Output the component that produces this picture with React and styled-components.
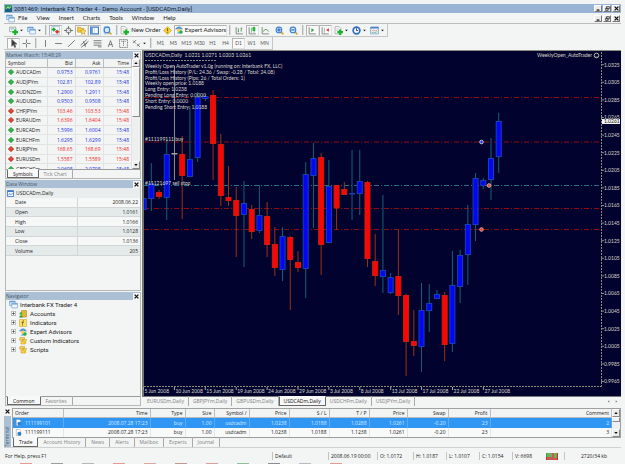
import styled, { createGlobalStyle, css } from "styled-components";

const GlobalStyle = createGlobalStyle`
  * {
    box-sizing: border-box;
  }

  body {
    margin: 0;
    background: #f3f4f4;
    color: #222;
    font-family: "Open Sans", "Liberation Sans", sans-serif;
    font-size: 5px;
    line-height: 8px;
  }

  button, input {
    font: inherit;
    color: inherit;
  }

  svg {
    display: block;
    flex: none;
  }
`;

const Page = styled.div`
  display: flex;
  flex-direction: column;
  min-height: 100vh;
  padding: 4px 4px 0 4px;
`;

const TitleBar = styled.header`
  display: flex;
  align-items: center;
  gap: 2px;
  height: 9px;
  padding: 0 1px;
  background: #99b4d4;
  color: #14202e;
  font-family: Roboto, sans-serif;
  font-size: 6px;
`;

const Title = styled.h1`
  flex: 1;
  margin: 0;
  font-size: inherit;
  font-weight: 400;
  white-space: nowrap;
`;

const WindowButtons = styled.div`
  display: flex;
  gap: 1px;
  margin-left: auto;
`;

const WindowButton = styled.button`
  display: flex;
  align-items: center;
  justify-content: center;
  width: 8px;
  height: 7px;
  padding: 0;
  border: 1px solid;
  border-color: #fff #777 #777 #fff;
  background: #ececec;
`;

const MenuBar = styled.nav`
  display: flex;
  align-items: center;
  height: 11px;
  padding: 0 1px 0 2px;
  border-bottom: 1px solid #bcbcbc;
  font-family: Lato, sans-serif;
  font-size: 6px;
`;

const MenuItem = styled.button`
  padding: 0;
  border: 0;
  margin-left: ${({ $gap }) => $gap || 9}px;
  background: none;
`;

const Toolbars = styled.div`
  display: flex;
  flex-direction: column;
  align-items: flex-start;
`;

const Toolbar = styled.div`
  display: flex;
  align-items: center;
  height: 13px;
  padding: 0 1px 0 3px;
  border: solid #c4c6c6;
  border-width: 0 1px 1px 0;
`;

const Grip = styled.span`
  width: 2px;
  height: 10px;
  margin: 0 2px;
  border-left: 1px solid #b4b6b6;
  border-right: 1px solid #dcdede;
`;

const Tool = styled.button`
  display: flex;
  align-items: center;
  justify-content: center;
  gap: 2px;
  width: ${({ $width }) => $width || 13}px;
  height: 11px;
  padding: 0;
  border: 1px solid transparent;
  background: none;
  color: ${({ $muted }) => ($muted ? "#555" : "#222")};
  font-family: Lato, sans-serif;
  font-size: ${({ $muted }) => ($muted ? 5 : 6)}px;
  white-space: nowrap;

  ${({ $pressed }) =>
    $pressed &&
    css`
      border-color: #b2b4b4 #e0e0e0 #e0e0e0 #b2b4b4;
      background: #fafafa;
    `}
`;

const Workspace = styled.main`
  display: grid;
  grid-template-columns: 136px minmax(0, 1fr);
  gap: 1px;
  padding-left: 1px;
`;

const Sidebar = styled.aside`
  display: grid;
  grid-template-rows: 128px 111px 114px;
  gap: 1px;
  padding-top: 1px;
`;

const Panel = styled.section`
  display: flex;
  flex-direction: column;
  min-height: 0;
  border: 1px solid #b6b8b8;
  border-top: 0;
  overflow: hidden;
`;

const PanelTitle = styled.h2`
  display: flex;
  align-items: center;
  justify-content: space-between;
  flex: none;
  height: 8px;
  margin: 0;
  background: #abc0d4;
  color: #46586b;
  font-size: 5px;
  font-weight: 400;
`;

const CloseButton = styled.button`
  display: flex;
  align-items: center;
  justify-content: center;
  width: 7px;
  height: 7px;
  padding: 0;
  border: 0;
  background: #f4f4f4;
`;

const Quotes = styled.div`
  display: flex;
  flex: 1;
  min-height: 0;
  overflow: hidden;
`;

const Table = styled.table`
  flex: 0 1 auto;
  align-self: flex-start;
  width: 100%;
  height: ${({ $height }) => $height}px;
  border-collapse: collapse;
  table-layout: fixed;

  th, td {
    padding: 0 2px;
    overflow: hidden;
    font-weight: 400;
    text-align: right;
    white-space: nowrap;
    line-height: 8px;
  }

  th:first-child, td:first-child {
    text-align: left;
  }
`;

const QuoteRow = styled.tr`
  color: ${({ $down }) => ($down ? "#f0281e" : "#2230e6")};
  border-bottom: 1px solid #e2e4e4;

  td {
    border-right: 1px solid #e2e4e4;
  }

  td:first-child {
    color: #222;
  }
`;

const HeadRow = styled.tr`
  border-bottom: 1px solid #b8baba;
  background: #f2f3f3;

  th {
    border-right: 1px solid #bcbebe;
  }
`;

const Inline = styled.span`
  display: flex;
  align-items: center;
  gap: ${({ $gap }) => $gap || 2}px;
`;

const DataRow = styled.tr`
  border-bottom: 1px solid #d2d6d6;
  background: ${({ $shaded }) => ($shaded ? "#e4e9e9" : "#f6f7f7")};

  td {
    border-left: 1px solid #d2d6d6;
  }

  th:first-child {
    padding-left: 9px;
  }
`;

const DataHeading = styled(Inline)`
  height: 10px;
  padding-left: 1px;
  flex: none;
  background: #e9eded;
`;

const Scrollbar = styled.div`
  display: flex;
  flex-direction: column;
  justify-content: space-between;
  flex: none;
  width: 8px;
  background: #eef0f0;
`;

const ScrollButton = styled.button`
  display: flex;
  align-items: center;
  justify-content: center;
  height: 8px;
  padding: 0;
  border: 1px solid;
  border-color: #fff #888 #888 #fff;
  background: #ececec;
`;

const ScrollThumb = styled.span`
  flex: 0 0 ${({ $size }) => $size}px;
  margin-bottom: auto;
  border: 1px solid;
  border-color: #fff #888 #888 #fff;
  background: #f2f3f3;
`;

const Tabs = styled.div`
  display: flex;
  flex: none;
  height: ${({ $height }) => $height || 9}px;
  padding-left: 1px;
  border-top: 1px solid #9a9c9c;
`;

const Tab = styled.button`
  padding: 0 5px;
  margin-top: -1px;
  border: 0;
  border-right: 1px solid #aaa;
  background: none;
  color: #808282;
  line-height: 8px;
  white-space: nowrap;

  ${({ $active }) =>
    $active &&
    css`
      border: 1px solid #666;
      border-top-color: #f8f8f8;
      background: #f8f8f8;
      color: #111;
    `}
`;

const Tree = styled.ul`
  flex: 1;
  margin: 0;
  padding: 0 0 0 3px;
  list-style: none;
`;

const TreeItem = styled.li`
  display: flex;
  align-items: center;
  gap: ${({ $root }) => ($root ? 2 : 3)}px;
  height: 9px;
  padding-left: ${({ $root }) => ($root ? 0 : 2)}px;
  font-family: Roboto, sans-serif;
  font-size: 6px;
`;

const ChartPane = styled.section`
  display: flex;
  flex-direction: column;
  min-width: 0;
`;

const ChartTabs = styled(Tabs)`
  height: 11px;
  border-top: 1px solid #777;
  align-items: flex-start;

  ${Tab} {
    height: 10px;
    padding: 0 4px;
    line-height: 9px;
  }
`;

const TabArrows = styled.span`
  display: flex;
  gap: 5px;
  margin: 3px 3px 0 auto;
`;

const Terminal = styled.section`
  display: grid;
  grid-template-columns: 8px minmax(0, 1fr);
  margin-top: 1px;
  border-bottom: 1px solid #d0d2d2;
`;

const TerminalSide = styled.div`
  display: flex;
  flex-direction: column;
  gap: 1px;
`;

const TerminalTitle = styled.h2`
  flex: 1;
  width: 7px;
  margin: 0;
  background: #abc0d4;
  color: #46586b;
  font-size: 5px;
  font-weight: 400;
  line-height: 7px;
  writing-mode: vertical-rl;
  transform: rotate(180deg);
`;

const TerminalBody = styled.div`
  display: flex;
  border: 1px solid #a0a2a2;
  border-bottom: 0;
`;

const OrderRow = styled.tr`
  background: ${({ $selected }) => ($selected ? "#3096f4" : "#f8f9f9")};
  color: ${({ $selected }) => ($selected ? "#d6eaff" : "#222")};

  td {
    border-right: 1px solid ${({ $selected }) => ($selected ? "#58aaf6" : "#e4e6e6")};
  }
`;

const StatusBar = styled.footer`
  display: grid;
  grid-template-columns: minmax(0, 1fr) 56px 49px 36px 33px 33px 33px 34px 18px 57px;
  align-items: center;
  height: 10px;
  margin-top: 3px;
  white-space: nowrap;
`;

const StatusCell = styled.span`
  height: 8px;
  padding-left: ${({ $plain }) => ($plain ? 1 : 2)}px;
  border-left: ${({ $plain }) => ($plain ? 0 : 1)}px solid #c2c4c4;
  text-align: ${({ $center }) => ($center ? "center" : "left")};
`;

const Taskbar = styled.div`
  display: flex;
  gap: 19px;
  height: 2px;
  padding: 0 16px;
  margin-top: auto;
  overflow: hidden;
`;

const TaskMark = styled.span`
  flex: none;
  width: 12px;
  height: 1px;
  margin-top: 1px;
  background: ${({ $color }) => $color};
`;

const Icon = ({ size = 9, children }) => (
  <svg width={size} height={size} viewBox="0 0 16 16" fill="none" aria-hidden="true">
    {children}
  </svg>
);

const Cross = () => (
  <Icon size={5}>
    <path d="M2 2l12 12M14 2L2 14" stroke="#111" strokeWidth="4" />
  </Icon>
);

const Triangle = ({ up, size = 4 }) => (
  <Icon size={size}>
    <path d={up ? "M1 12h14L8 4z" : "M1 4h14L8 12z"} fill="#111" />
  </Icon>
);

const PlusMark = () => <path d="M11 6v10M6 11h10" stroke="#17b52b" strokeWidth="4" />;

const NewChartIcon = () => (
  <Icon>
    <path d="M1 2h11v8H1z" fill="#e9f4ea" stroke="#66906c" />
    <path d="M3 5h6" stroke="#4b85c8" />
    <PlusMark />
  </Icon>
);

const ProfilesIcon = () => (
  <Icon>
    <path d="M1 2h10v8H1z" fill="#cfe4fa" stroke="#5c93cf" />
    <path d="M5 6h10v8H5z" fill="#f2f8ff" stroke="#5c93cf" />
    <path d="M1 3h10M5 7h10" stroke="#5c93cf" strokeWidth="2" />
  </Icon>
);

const WatchIcon = () => (
  <Icon>
    <path d="M1 1h14v14H1z" fill="#f6fbff" stroke="#80a9d4" />
    <path d="M5 2l4 4-4 4-4-4z" fill="#20ad35" />
    <path d="M11 6l4 4-4 4-4-4z" fill="#e2382b" />
  </Icon>
);

const TargetIcon = () => (
  <Icon>
    <circle cx="8" cy="8" r="4.500" stroke="#666" strokeWidth="1.500" />
    <path d="M8 0v6M8 10v6M0 8h6M10 8h6" stroke="#666" strokeWidth="1.500" />
  </Icon>
);

const FolderStarIcon = () => (
  <Icon>
    <path d="M1 2h5l1 2h5v7H1z" fill="#f5c93c" stroke="#b98c1a" />
    <path d="M11 5l1.500 3 3.500.500-2.500 2.500.500 4-3-2-3 2 .500-4L6 8.500 9.500 8z" fill="#ffe06b" stroke="#bb8d16" />
  </Icon>
);

const WindowIcon = () => (
  <Icon>
    <path d="M1 2h14v12H1z" fill="#fff" stroke="#3d7cc2" strokeWidth="2" />
    <path d="M1 2h4v12H1z" fill="#5b9ade" />
    <path d="M7 5h2M7 8h2M7 11h2" stroke="#999" />
  </Icon>
);

const MagnifierIcon = ({ mark }) => (
  <Icon>
    {mark === "page" && <path d="M2 1h9v13H2z" fill="#eef5fc" stroke="#8ba9c6" />}
    <path d="M10 10l5 5" stroke="#d8a92d" strokeWidth="3" />
    <circle cx="7" cy="7" r="5" fill="#d5e9fd" stroke="#3f82cc" strokeWidth="2" />
    {mark !== "page" && <path d="M4 7h6" stroke="#2465b4" strokeWidth="2" />}
    {mark === "plus" && <path d="M7 4v6" stroke="#2465b4" strokeWidth="2" />}
  </Icon>
);

const OrderIcon = () => (
  <Icon>
    <path d="M2 1h7l3 3v10H2z" fill="#fdfdfd" stroke="#888" />
    <path d="M4 5h5M4 8h4" stroke="#aaa" />
    <PlusMark />
  </Icon>
);

const WarningIcon = () => (
  <Icon>
    <path d="M8 1l7 7-7 7-7-7z" fill="#f8cf36" stroke="#c8981a" />
    <path d="M8 4v5M8 10v2" stroke="#8a6508" strokeWidth="2" />
  </Icon>
);

const AdvisorIcon = () => (
  <Icon size={8}>
    <path d="M1 6q7-9 14 0z" fill="#4ea1dc" stroke="#2c78b4" />
    <circle cx="8" cy="9" r="4" fill="#f3cf6a" />
    <path d="M3 15q5-6 10 0z" fill="#47a8e0" />
    <circle cx="12" cy="12" r="3.500" fill="#25b143" />
  </Icon>
);

const BarsIcon = ({ kind }) => (
  <Icon>
    <path d="M2 2v12h12" stroke="#777" strokeWidth="1.500" />
    {kind === "bars" && <path d="M6 4v7M5 10h2M11 3v7M11 4h2" stroke="#4d8c55" strokeWidth="1.500" />}
    {kind === "candles" && (
      <>
        <path d="M6 3v9M11 1v11" stroke="#168a2a" />
        <path d="M8 2h5v7H8z" fill="#22b53a" />
      </>
    )}
    {kind === "line" && <path d="M4 10q4-8 10 0" stroke="#3c9a4a" strokeWidth="1.500" />}
    {kind === "scroll" && <path d="M6 4v7l5-4z" fill="#22a53a" />}
    {kind === "shift" && (
      <>
        <path d="M6 3v9" stroke="#777" />
        <path d="M14 4v6L9 7z" fill="#d73a2c" />
      </>
    )}
  </Icon>
);

const ClockIcon = () => (
  <Icon>
    <circle cx="8" cy="8" r="6" fill="#f2f8ff" stroke="#2f6fc4" strokeWidth="3" />
    <path d="M8 4v4h3" stroke="#333" strokeWidth="1.500" />
  </Icon>
);

const TemplateIcon = () => (
  <Icon>
    <path d="M1 2h14v12H1z" fill="#eff6ff" stroke="#4c83be" />
    <path d="M1 3h14" stroke="#4c83be" strokeWidth="3" />
    <path d="M3 9l3-2 3 2 4-2" stroke="#d05a40" />
    <path d="M3 12l3-1 3 1 4-2" stroke="#38a046" />
  </Icon>
);

const linePaths = {
  cursor: "M5 1v12l3-3 2 5 2-1-2-5h4z",
  crosshair: "M8 1v6M8 9v6M1 8h6M9 8h6",
  vertical: "M8 2v12",
  horizontal: "M2 8h12",
  trend: "M2 14L14 2",
  channel: "M1 11L12 1M2 15L15 4M7 12l6-5M6 4l4 10",
  fibonacci: "M1 3h14M1 7h14M1 11h14M9 14h6",
  text: "M4 14L8 3l4 11M5 10h6",
  label: "M1 1h14v14H1zM4 4h8M8 4v8",
  arrows: "M2 3l5 5M2 7l5-5M9 9l5 5M9 13l5-5",
};

const LineIcon = ({ name }) => (
  <Icon>
    <path
      d={linePaths[name]}
      stroke="#666"
      strokeWidth="1.500"
      fill={name === "cursor" ? "#333" : "none"}
      strokeDasharray={name === "label" ? "2 1" : undefined}
    />
  </Icon>
);

const ChartGlyph = ({ size = 7 }) => (
  <Icon size={size}>
    <path d="M1 1h14v14H1z" fill="#eaf3ff" stroke="#3c78c8" strokeWidth="2" />
    <path d="M1 3h14" stroke="#3c78c8" strokeWidth="3" />
    <path d="M3 12l3-4 3 3 4-4" stroke="#3c78c8" strokeWidth="1.500" />
  </Icon>
);

const AppLogo = () => (
  <Icon size={7}>
    <path d="M0 0h16v16H0z" fill="#2e9a52" />
    <path d="M0 11l5-5 4 4 7-8v14H0z" fill="#1b5f84" />
    <path d="M3 9l4-5 3 4 4-5" stroke="#c8f1a0" strokeWidth="2" />
  </Icon>
);

const Direction = ({ down }) => (
  <Icon size={6}>
    <path d="M8 1l7 7-7 7-7-7z" fill={down ? "#e5432f" : "#2cb548"} stroke={down ? "#a82a18" : "#178a30"} strokeWidth="2" />
  </Icon>
);

const DocIcon = () => (
  <Icon size={7}>
    <path d="M3 1h7l3 3v11H3z" fill="#fff" stroke="#888" />
    <circle cx="10" cy="11" r="4.500" fill="#2f7fd0" />
  </Icon>
);

const Expander = () => (
  <Icon size={5}>
    <path d="M1 1h14v14H1z" fill="#fff" stroke="#888" strokeWidth="2" />
    <path d="M4 8h8M8 4v8" stroke="#222" strokeWidth="2" />
  </Icon>
);

const NavIcon = ({ name }) => {
  if (name === "Accounts") {
    return (
      <Icon size={8}>
        <path d="M5 1h10v13H5z" fill="#e6b62e" stroke="#a27a14" />
        <circle cx="4" cy="7" r="3" fill="#4fb84c" />
        <path d="M0 15q4-9 8 0z" fill="#289a3a" />
      </Icon>
    );
  }
  if (name === "Expert Advisors") return <AdvisorIcon />;
  if (name === "Indicators") {
    return (
      <Icon size={8}>
        <path d="M1 1h14v14H1z" fill="#fbdf68" stroke="#c79d22" />
        <path d="M10 3q-3 0-3 4v6M5 7h5" stroke="#7c5c0b" strokeWidth="1.500" />
      </Icon>
    );
  }
  return (
    <Icon size={8}>
      <path d="M2 1h9v4h4l-3 9H4V6H1z" fill="#f7d552" stroke="#b88d1c" />
      <path d="M6 5h4M6 8h5" stroke="#94721a" />
      <path d="M12 9l3 3-3 3-3-3z" fill="#f0bd2c" />
    </Icon>
  );
};

const quotes = [
  ["AUDCADm", "0.9753", "0.9761"],
  ["AUDJPYm", "102.81", "102.89"],
  ["AUDNZDm", "1.2900", "1.2911"],
  ["AUDUSDm", "0.9503", "0.9508"],
  ["CHFJPYm", "103.46", "103.53", true],
  ["EURAUDm", "1.6396", "1.6404", true],
  ["EURCADm", "1.5996", "1.6004"],
  ["EURCHFm", "1.6295", "1.6299"],
  ["EURJPYm", "168.65", "168.69", true],
  ["EURUSDm", "1.5587", "1.5589", true],
  ["GBPCHFm", "2.0698", "2.0708"],
];

const dataRows = [
  ["Date", "2008.06.22"],
  ["Open", "1.0161"],
  ["High", "1.0166"],
  ["Low", "1.0128"],
  ["Close", "1.0136"],
  ["Volume", "205"],
];

const orderColumns = [
  ["Order", 50],
  ["Time", 87],
  ["Type", 35],
  ["Size", 29],
  ["Symbol  /", 35],
  ["Price", 40],
  ["S / L", 40],
  ["T / P", 40],
  ["Price", 38],
  ["Swap", 41],
  ["Profit", 42],
  ["Comment"],
];

const orders = [
  ["111199101", "2008.07.28 17:23", "buy", "1.00", "usdcadm", "1.0238", "1.0188", "1.0288", "1.0261", "-0.20", "23", "2"],
  ["111199111", "2008.07.28 17:23", "buy", "1.00", "usdcadm", "1.0238", "1.0188", "1.1238", "1.0261", "-0.20", "23", "3"],
];

// [kind, high, body top, body bottom, low]
const candles = [
  ["b", 160, 198, 210, 210], ["b", 163, 183, 199, 211], ["r", 190, 192, 197, 199],
  ["b", 139, 154, 198, 220], ["w", 66, 153, 154, 180], ["r", 136, 154, 176, 219],
  ["b", 107, 159, 177, 177], ["b", 92, 97, 158, 162], ["b", 94, 96, 99, 101],
  ["r", 90, 95, 144, 180], ["r", 134, 144, 196, 206], ["r", 166, 197, 201, 206],
  ["r", 187, 200, 216, 257], ["b", 181, 203, 215, 267], ["r", 205, 209, 232, 239],
  ["b", 185, 215, 231, 233], ["r", 202, 216, 245, 257], ["r", 227, 244, 268, 276],
  ["b", 227, 236, 270, 281], ["r", 236, 237, 260, 310], ["r", 251, 262, 268, 272],
  ["b", 162, 174, 269, 298], ["b", 143, 158, 176, 228], ["r", 153, 157, 245, 275],
  ["b", 160, 186, 243, 243], ["r", 185, 185, 208, 230], ["r", 182, 189, 195, 195],
  ["b", 150, 193, 194, 220], ["b", 150, 181, 194, 215], ["r", 181, 182, 259, 267],
  ["r", 234, 261, 276, 286], ["b", 195, 270, 277, 293], ["b", 273, 277, 293, 294],
  ["r", 230, 276, 296, 315], ["r", 294, 295, 342, 376], ["r", 310, 341, 346, 356],
  ["b", 283, 310, 347, 372], ["b", 284, 303, 311, 332], ["b", 290, 294, 299, 299],
  ["r", 292, 295, 345, 361], ["b", 251, 285, 344, 352], ["b", 250, 255, 287, 303],
  ["b", 205, 224, 255, 285], ["b", 173, 178, 225, 241], ["b", 178, 180, 186, 189],
  ["b", 138, 158, 180, 200], ["b", 113, 121, 157, 173],
];

const candleFill = { b: "#0505f5", r: "#fb0505", w: "#a5a5a5" };
const candleLine = { b: "#17607a", r: "#9a3214", w: "#8d8d90" };
const bodyLine = { b: "#1640b8", r: "#c8200c", w: "#a5a5a5" };

const levels = [[97.5, "#8f0c10"], [142, "#8f0c10"], [185.5, "#2a7086"], [208.5, "#8f0c10"], [229.5, "#8f0c10"]];

const dates = [
  "5 Jun 2008", "10 Jun 2008", "15 Jun 2008", "19 Jun 2008", "24 Jun 2008", "29 Jun 2008",
  "3 Jul 2008", "8 Jul 2008", "13 Jul 2008", "17 Jul 2008", "22 Jul 2008", "27 Jul 2008",
];

const notes = [
  "Weekly Open AutoTrader v1.0g (running on: Interbank FX, LLC)",
  "Profit/Loss History (P/L: 24.36 / Swap: -0.28 / Total: 24.08)",
  "Profit/Loss History (Pips: 26 / Total Orders: 1)",
  "Weekly open price: 1.0188",
  "Long Entry: 1.0238",
  "Pending Long Entry: 0.0000",
  "Short Entry: 0.0000",
  "Pending Short Entry: 1.0188",
];

const ChartDrawing = styled.svg`
  width: 100%;
  height: auto;
  background: #02022e;
  font-family: Lato, sans-serif;
  font-size: 5px;

  text {
    fill: #d8d8cc;
  }
`;

function Chart() {
  return (
    <ChartDrawing viewBox="142 50 479 346" role="img" aria-label="USDCADm daily candlestick chart">
      <path d="M142 50.500H621" stroke="#8a8c84" fill="none" />
      {levels.map(([y, color]) => (
        <path key={y} d={`M144 ${y}H601`} stroke={color} strokeDasharray="5 2 1 2" fill="none" />
      ))}
      {candles.map(([kind, high, top, bottom, low], i) => {
        const x = 143.6 + i * 7.72;
        return (
          <g key={i}>
            <path d={`M${x} ${high}V${low}`} stroke={candleLine[kind]} />
            <rect
              x={x - 2.5}
              y={top + 0.5}
              width="5"
              height={Math.max(bottom - top - 1, 0.5)}
              fill={candleFill[kind]}
              stroke={bodyLine[kind]}
            />
          </g>
        );
      })}
      <rect x="142" y="51" width="2" height="345" fill="#74776f" />
      <circle cx="481.500" cy="142" r="1.800" fill="#2438d8" stroke="#b9c4dc" />
      <circle cx="489" cy="185.500" r="1.800" fill="#f04030" stroke="#d0a890" />
      <circle cx="481.500" cy="229.500" r="1.800" fill="#f04030" stroke="#d0a890" />
      <path d="M601.500 52V386.500M144 386.500H601.500" stroke="#8c8c78" strokeDasharray="2 1" fill="none" />
      <text x="145" y="57">USDCADm,Daily&#160; 1.0221 1.0271 1.0203 1.0261</text>
      <path d="M145 60.500h71" stroke="#8c8c84" strokeDasharray="2 1" />
      {notes.map((note, i) => (
        <text key={note} x="145" y={68 + i * 5.8}>{note}</text>
      ))}
      <text x="145" y="141">#111199111 buy</text>
      <text x="145" y="185">#11121697 sell stop</text>
      <text x="592" y="57" textAnchor="end">WeeklyOpen_AutoTrader</text>
      <circle cx="596.500" cy="55.500" r="2.300" fill="none" stroke="#b8b8ac" />
      <path d="M595.500 56.500q1 1 2 0" stroke="#b8b8ac" strokeWidth="0.600" fill="none" />
      {Array.from({ length: 19 }, (_, i) => (
        <g key={i}>
          <path d={`M601 ${64.7 + i * 17.6}h3`} stroke="#8c8c78" />
          <text x="604" y={66.5 + i * 17.6}>{(1.0325 - i * 0.002).toFixed(4)}</text>
        </g>
      ))}
      <rect x="602" y="119" width="18" height="5" fill="#f4f4f4" />
      <text x="604" y="123" style={{ fill: "#111" }}>1.0261</text>
      {dates.map((date, i) => (
        <g key={date}>
          <path d={`M${143.5 + i * 30.9} 387v3`} stroke="#a8a898" />
          <text x={144.5 + i * 30.9} y="393">{date}</text>
        </g>
      ))}
    </ChartDrawing>
  );
}

function WindowControls() {
  return (
    <WindowButtons>
      <WindowButton aria-label="Minimize">
        <Icon size={5}><path d="M2 13h9" stroke="#111" strokeWidth="4" /></Icon>
      </WindowButton>
      <WindowButton aria-label="Restore">
        <Icon size={5}><path d="M5 2h9v7H5zM2 7h8v7H2z" stroke="#111" strokeWidth="2" /></Icon>
      </WindowButton>
      <WindowButton aria-label="Close"><Cross /></WindowButton>
    </WindowButtons>
  );
}

function PanelHeader({ children }) {
  return (
    <PanelTitle>
      {children}
      <CloseButton aria-label={`Close ${children}`}><Cross /></CloseButton>
    </PanelTitle>
  );
}

function Scroll({ thumb }) {
  return (
    <Scrollbar>
      <ScrollButton aria-label="Scroll up"><Triangle up /></ScrollButton>
      <ScrollThumb $size={thumb} />
      <ScrollButton aria-label="Scroll down"><Triangle /></ScrollButton>
    </Scrollbar>
  );
}

function MarketWatch() {
  return (
    <Panel>
      <PanelHeader>Market Watch: 15:48:29</PanelHeader>
      <Quotes>
        <Table $height={115}>
          <colgroup>
            <col width="41" />
            <col width="28" />
            <col width="28" />
            <col />
          </colgroup>
          <thead>
            <HeadRow>
              <th>Symbol</th>
              <th>Bid</th>
              <th>Ask</th>
              <th>Time</th>
            </HeadRow>
          </thead>
          <tbody>
            {quotes.map(([symbol, bid, ask, down]) => (
              <QuoteRow key={symbol} $down={down}>
                <td><Inline><Direction down={down} />{symbol}</Inline></td>
                <td>{bid}</td>
                <td>{ask}</td>
                <td>15:48</td>
              </QuoteRow>
            ))}
          </tbody>
        </Table>
        <Scroll thumb={50} />
      </Quotes>
      <Tabs>
        <Tab $active>Symbols</Tab>
        <Tab>Tick Chart</Tab>
      </Tabs>
    </Panel>
  );
}

function DataWindow() {
  return (
    <Panel>
      <PanelHeader>Data Window</PanelHeader>
      <DataHeading><ChartGlyph />USDCADm,Daily</DataHeading>
      <Table $height={58}>
        <colgroup>
          <col width="71" />
          <col />
        </colgroup>
        <tbody>
          {dataRows.map(([name, value], i) => (
            <DataRow key={name} $shaded={i % 2 === 1}>
              <th scope="row">{name}</th>
              <td>{value}</td>
            </DataRow>
          ))}
        </tbody>
      </Table>
    </Panel>
  );
}

function Navigator() {
  return (
    <Panel>
      <PanelHeader>Navigator</PanelHeader>
      <Tree>
        <TreeItem $root><ProfilesIcon />Interbank FX Trader 4</TreeItem>
        {["Accounts", "Indicators", "Expert Advisors", "Custom Indicators", "Scripts"].map((name) => (
          <TreeItem key={name}><Expander /><NavIcon name={name} />{name}</TreeItem>
        ))}
      </Tree>
      <Tabs>
        <Tab $active>Common</Tab>
        <Tab>Favorites</Tab>
      </Tabs>
    </Panel>
  );
}

function MainToolbar() {
  return (
    <Toolbar>
      <Tool aria-label="New chart" $width={18}><NewChartIcon /><Triangle size={3} /></Tool>
      <Tool aria-label="Profiles" $width={18}><ProfilesIcon /><Triangle size={3} /></Tool>
      <Grip />
      <Tool aria-label="Market watch" $pressed><WatchIcon /></Tool>
      <Tool aria-label="Data window"><TargetIcon /></Tool>
      <Tool aria-label="Navigator" $pressed><FolderStarIcon /></Tool>
      <Tool aria-label="Terminal" $pressed><WindowIcon /></Tool>
      <Tool aria-label="Strategy tester"><MagnifierIcon mark="page" /></Tool>
      <Grip />
      <Tool $width={41}><OrderIcon />New Order</Tool>
      <Tool aria-label="Alerts"><WarningIcon /></Tool>
      <Tool $width={53} $pressed><AdvisorIcon />Expert Advisors</Tool>
      <Grip />
      <Tool aria-label="Bar chart"><BarsIcon kind="bars" /></Tool>
      <Tool aria-label="Candlesticks" $pressed><BarsIcon kind="candles" /></Tool>
      <Tool aria-label="Line chart"><BarsIcon kind="line" /></Tool>
      <Tool aria-label="Zoom in" $width={15}><MagnifierIcon mark="plus" /></Tool>
      <Tool aria-label="Zoom out"><MagnifierIcon mark="minus" /></Tool>
      <Grip />
      <Tool aria-label="Auto scroll" $pressed><BarsIcon kind="scroll" /></Tool>
      <Tool aria-label="Chart shift" $pressed><BarsIcon kind="shift" /></Tool>
      <Tool aria-label="Indicators" $width={18}><OrderIcon /><Triangle size={3} /></Tool>
      <Tool aria-label="Periods" $width={18}><ClockIcon /><Triangle size={3} /></Tool>
      <Tool aria-label="Templates" $width={18}><TemplateIcon /><Triangle size={3} /></Tool>
    </Toolbar>
  );
}

function LineToolbar() {
  return (
    <Toolbar>
      <Tool aria-label="Cursor" $pressed><LineIcon name="cursor" /></Tool>
      <Tool aria-label="Crosshair"><LineIcon name="crosshair" /></Tool>
      <Grip />
      {["vertical", "horizontal", "trend", "channel", "fibonacci", "text", "label"].map((name) => (
        <Tool key={name} aria-label={name}><LineIcon name={name} /></Tool>
      ))}
      <Tool aria-label="Arrows" $width={18}><LineIcon name="arrows" /><Triangle size={3} /></Tool>
      <Grip />
      {["M1", "M5", "M15", "M30", "H1", "H4", "D1", "W1", "MN"].map((period) => (
        <Tool key={period} $muted $pressed={period === "D1"}>{period}</Tool>
      ))}
    </Toolbar>
  );
}

function TerminalPanel() {
  return (
    <Terminal>
      <TerminalSide>
        <CloseButton aria-label="Close terminal"><Cross /></CloseButton>
        <TerminalTitle>Terminal</TerminalTitle>
      </TerminalSide>
      <div>
        <TerminalBody>
          <Table $height={28}>
            <colgroup>
              {orderColumns.map(([name, width], i) => (
                <col key={i} width={width} />
              ))}
            </colgroup>
            <thead>
              <HeadRow>
                {orderColumns.map(([name], i) => (
                  <th key={i}>{name}</th>
                ))}
              </HeadRow>
            </thead>
            <tbody>
              {orders.map(([id, ...cells], row) => (
                <OrderRow key={id} $selected={row === 0}>
                  <td><Inline $gap={3}><DocIcon />{id}</Inline></td>
                  {cells.map((cell, i) => (
                    <td key={i}>{cell}</td>
                  ))}
                </OrderRow>
              ))}
            </tbody>
          </Table>
          <Scroll thumb={5} />
        </TerminalBody>
        <Tabs $height={10}>
          <Tab $active>Trade</Tab>
          {["Account History", "News", "Alerts", "Mailbox", "Experts", "Journal"].map((name) => (
            <Tab key={name}>{name}</Tab>
          ))}
        </Tabs>
      </div>
    </Terminal>
  );
}

export default function App() {
  return (
    <Page>
      <GlobalStyle />
      <TitleBar>
        <AppLogo />
        <Title>2081469: Interbank FX Trader 4 - Demo Account - [USDCADm,Daily]</Title>
        <WindowControls />
      </TitleBar>
      <MenuBar>
        <ProfilesIcon />
        <MenuItem $gap={3}>File</MenuItem>
        {["View", "Insert", "Charts", "Tools", "Window", "Help"].map((name) => (
          <MenuItem key={name}>{name}</MenuItem>
        ))}
        <WindowControls />
      </MenuBar>
      <Toolbars>
        <MainToolbar />
        <LineToolbar />
      </Toolbars>
      <Workspace>
        <Sidebar>
          <MarketWatch />
          <DataWindow />
          <Navigator />
        </Sidebar>
        <ChartPane>
          <Chart />
          <ChartTabs>
            <Tab>EURUSDm,Daily</Tab>
            <Tab>GBPJPYm,Daily</Tab>
            <Tab>GBPUSDm,Daily</Tab>
            <Tab $active>USDCADm,Daily</Tab>
            <Tab>USDCHFm,Daily</Tab>
            <Tab>USDJPYm,Daily</Tab>
            <TabArrows>
              <Icon size={3}><path d="M12 1L4 8l8 7z" fill="#777" /></Icon>
              <Icon size={3}><path d="M4 1l8 7-8 7z" fill="#777" /></Icon>
            </TabArrows>
          </ChartTabs>
        </ChartPane>
      </Workspace>
      <TerminalPanel />
      <StatusBar>
        <StatusCell $plain>For Help, press F1</StatusCell>
        <StatusCell>Default</StatusCell>
        <StatusCell>2008.06.19 00:00</StatusCell>
        <StatusCell>O: 1.0172</StatusCell>
        <StatusCell>H: 1.0187</StatusCell>
        <StatusCell>L: 1.0107</StatusCell>
        <StatusCell>C: 1.0154</StatusCell>
        <StatusCell>V: 6698</StatusCell>
        <svg width="12" height="7" viewBox="0 0 12 7" aria-hidden="true">
          <path d="M0 0h12v7H0z" fill="#b8322a" />
          <path d="M0 0h6v4H0zM8 0h3v5H8z" fill="#43a03c" />
          <path d="M2 0v7M4 0v7M6 0v7M8 0v7M10 0v7" stroke="#f0d9c8" strokeWidth="0.500" />
        </svg>
        <StatusCell $center>2720/34 kb</StatusCell>
      </StatusBar>
      <Taskbar aria-hidden="true">
        {["#e79a94", "#9a9c9e", "#b4b6b8", "#e79a94", "#e0a8a0", "#c09890", "#d8a0a0", "#8fc09a", "#8c8c90", "#b8bcc0", "#e79a94"].map((color, i) => (
          <TaskMark key={i} $color={color} />
        ))}
      </Taskbar>
    </Page>
  );
}
